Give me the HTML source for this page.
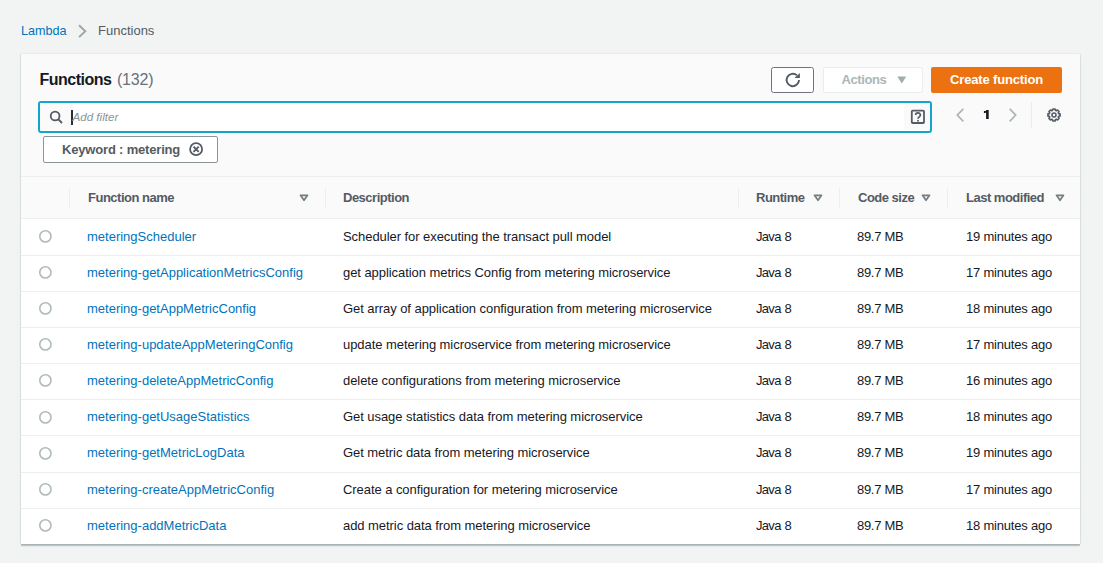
<!DOCTYPE html>
<html><head><meta charset="utf-8">
<style>
*{margin:0;padding:0;box-sizing:border-box}
html,body{width:1103px;height:563px;overflow:hidden;background:#f2f3f3;font-family:"Liberation Sans",sans-serif;font-size:13px;color:#16191f}
.a{position:absolute;white-space:nowrap}
.t{line-height:16px;height:16px}
.panel{position:absolute;left:21px;top:54px;width:1059px;height:490px;background:#fafafa;border-radius:1px;box-shadow:0 1px 0 0 #aab4b6,0 2px 0 0 #bcc3c5,0 3px 1px 0 rgba(0,28,36,.05),1px 0 1px 0 rgba(0,28,36,.1),-1px 0 1px 0 rgba(0,28,36,.1),0 -1px 1px 0 rgba(0,28,36,.02)}
.hline{position:absolute;left:0;width:1059px;height:1px;background:#edefef}
.vdiv{position:absolute;top:134px;width:1px;height:20px;background:#edefef}
.link{color:#0073bb}
.th{font-weight:bold;color:#545b64;font-size:13px;letter-spacing:-0.5px}
.sort{position:absolute;top:140px}
</style></head><body>
<!-- breadcrumb -->
<div class="a t link" style="left:21px;top:22.5px;font-size:12.6px">Lambda</div>
<svg class="a" style="left:77px;top:24px" width="11" height="15" viewBox="0 0 11 15"><path d="M2 1.3 L8.3 7.2 L2 13.1" fill="none" stroke="#9aa6a7" stroke-width="1.9"/></svg>
<div class="a t" style="left:98px;top:22.5px;color:#545b64">Functions</div>

<div class="panel">
  <!-- header -->
  <div class="a" style="left:18.5px;top:16.5px;font-size:16px;line-height:18px;font-weight:bold;color:#16191f;letter-spacing:-0.5px">Functions<span style="font-weight:normal;color:#687078;font-size:16px;margin-left:5.5px;letter-spacing:-0.2px">(132)</span></div>

  <!-- refresh button -->
  <div class="a" style="left:750px;top:13px;width:43px;height:26px;border:1px solid #6c737a;border-radius:2.5px;background:#fff"></div>
  <svg class="a" style="left:759px;top:14px" width="26" height="24" viewBox="0 0 26 24"><path d="M19 12 A6.2 6.2 0 1 1 16.9 7.3" fill="none" stroke="#545b64" stroke-width="1.9"/><path d="M19.9 4.9 L19.9 10.1 L14.5 10.1 Z" fill="#545b64"/></svg>

  <!-- actions -->
  <div class="a" style="left:802px;top:13px;width:100px;height:26px;border:1px solid #eaeded;border-radius:2px;background:#fff"></div>
  <div class="a t" style="left:820.5px;top:18px;font-weight:bold;color:#aab7b8;font-size:13px;letter-spacing:-0.4px">Actions</div>
  <svg class="a" style="left:875px;top:22px" width="11" height="9" viewBox="0 0 11 9"><path d="M1.3 0.4 H10.2 L5.75 7.6 Z" fill="#9fadae"/></svg>

  <!-- create function -->
  <div class="a" style="left:910px;top:13px;width:131px;height:26px;border-radius:2px;background:#ec7211"></div>
  <div class="a t" style="left:929px;top:18px;font-weight:bold;color:#fff;font-size:13px;letter-spacing:-0.15px">Create function</div>

  <!-- search -->
  <div class="a" style="left:17px;top:47px;width:894px;height:31.5px;border:2px solid #12a6ce;border-radius:3px;background:#fff"></div>
  <div class="a" style="left:19px;top:49px;width:32px;height:27px;background:#fafafa"></div>
  <svg class="a" style="left:27px;top:55px" width="16" height="16" viewBox="0 0 16 16"><circle cx="7.1" cy="7" r="4.4" fill="none" stroke="#545b64" stroke-width="1.8"/><path d="M10.2 10.2 L14 14" stroke="#545b64" stroke-width="1.9"/></svg>
  <div class="a" style="left:50px;top:56px;width:2px;height:14.5px;background:#2b2e34"></div>
  <div class="a t" style="left:51.5px;top:54.5px;font-style:italic;color:#879596;font-size:11.6px">Add filter</div>
  <div class="a" style="left:883px;top:49px;width:26px;height:27px;background:#fafafa"></div>
  <svg class="a" style="left:889px;top:55px" width="16" height="16" viewBox="0 0 16 16"><rect x="1.8" y="1.7" width="12.2" height="12.3" rx="0.8" fill="none" stroke="#545b64" stroke-width="1.8"/><path d="M5.6 6 C5.6 3.3 10.4 3.3 10.4 5.9 C10.4 7.8 8 7.8 8 9.8" fill="none" stroke="#545b64" stroke-width="1.7"/><circle cx="8" cy="11.7" r="0.95" fill="#545b64"/></svg>

  <!-- pagination -->
  <svg class="a" style="left:934px;top:54px" width="10" height="14" viewBox="0 0 10 14"><path d="M8.3 0.8 L2.3 7.1 L8.3 13.4" fill="none" stroke="#aab7b8" stroke-width="1.7"/></svg>
  <svg class="a" style="left:961px;top:54px" width="10" height="14" viewBox="0 0 10 14"><path d="M4.1 2 H6.7 V11 H4.1 Z M1.9 3.3 L4.4 2 L4.4 4.4 L1.9 5.2 Z" fill="#16191f"/></svg>
  <svg class="a" style="left:987px;top:54px" width="10" height="14" viewBox="0 0 10 14"><path d="M1.7 0.8 L7.7 7.1 L1.7 13.4" fill="none" stroke="#aab7b8" stroke-width="1.7"/></svg>
  <div class="a" style="left:1010px;top:48px;width:1px;height:26px;background:#eaeded"></div>
  <svg class="a" style="left:1025px;top:53px" width="16" height="16" viewBox="0 0 16 16">
    <path d="M12.69 6.57 L14.01 6.94 L14.01 9.06 L12.69 9.43 L12.33 10.30 L13.00 11.50 L11.50 13.00 L10.30 12.33 L9.43 12.69 L9.06 14.01 L6.94 14.01 L6.57 12.69 L5.70 12.33 L4.50 13.00 L3.00 11.50 L3.67 10.30 L3.31 9.43 L1.99 9.06 L1.99 6.94 L3.31 6.57 L3.67 5.70 L3.00 4.50 L4.50 3.00 L5.70 3.67 L6.57 3.31 L6.94 1.99 L9.06 1.99 L9.43 3.31 L10.30 3.67 L11.50 3.00 L13.00 4.50 L12.33 5.70 Z" fill="none" stroke="#545b64" stroke-width="1.7" stroke-linejoin="round"/>
    <circle cx="8" cy="8" r="2.0" fill="none" stroke="#545b64" stroke-width="1.6"/>
  </svg>

  <!-- token -->
  <div class="a" style="left:22px;top:82px;width:175px;height:27px;border:1px solid #8d9599;border-radius:2px;background:#fff"></div>
  <div class="a t" style="left:41px;top:88px;font-weight:bold;color:#545b64;font-size:13px;letter-spacing:-0.18px">Keyword : metering</div>
  <svg class="a" style="left:167px;top:88px" width="16" height="16" viewBox="0 0 16 16"><circle cx="8.1" cy="7.2" r="6" fill="none" stroke="#545b64" stroke-width="1.8"/><path d="M5.5 4.6 L10.7 9.8 M10.7 4.6 L5.5 9.8" stroke="#545b64" stroke-width="1.9"/></svg>

  <!-- table -->
  <div class="hline" style="top:122px"></div>
  <div class="a" style="left:0;top:165px;width:1059px;height:325px;background:#fff"></div>
  <div class="hline" style="top:164px"></div>
  <div class="vdiv" style="left:48px"></div>
  <div class="vdiv" style="left:304px"></div>
  <div class="vdiv" style="left:717px"></div>
  <div class="vdiv" style="left:818px"></div>
  <div class="vdiv" style="left:926px"></div>

  <div class="a t th" style="left:67px;top:136px">Function name</div>
  <div class="a t th" style="left:322px;top:136px">Description</div>
  <div class="a t th" style="left:735px;top:136px">Runtime</div>
  <div class="a t th" style="left:837px;top:136px">Code size</div>
  <div class="a t th" style="left:945px;top:136px">Last modified</div>
  <svg class="sort a" style="left:278px" width="10" height="9" viewBox="0 0 10 9"><path d="M1.5 1.3 H8.5 L5 6.3 Z" fill="none" stroke="#727f81" stroke-width="1.7" stroke-linejoin="round"/></svg>
  <svg class="sort a" style="left:792px" width="10" height="9" viewBox="0 0 10 9"><path d="M1.5 1.3 H8.5 L5 6.3 Z" fill="none" stroke="#727f81" stroke-width="1.7" stroke-linejoin="round"/></svg>
  <svg class="sort a" style="left:900px" width="10" height="9" viewBox="0 0 10 9"><path d="M1.5 1.3 H8.5 L5 6.3 Z" fill="none" stroke="#727f81" stroke-width="1.7" stroke-linejoin="round"/></svg>
  <svg class="sort a" style="left:1034px" width="10" height="9" viewBox="0 0 10 9"><path d="M1.5 1.3 H8.5 L5 6.3 Z" fill="none" stroke="#727f81" stroke-width="1.7" stroke-linejoin="round"/></svg>

  <svg class="a" style="left:17px;top:175.0px" width="15" height="15" viewBox="0 0 15 15"><circle cx="7.4" cy="7.4" r="5.6" fill="#fff" stroke="#b0bbbc" stroke-width="1.6"/></svg>
  <div class="a t link" style="left:66px;top:174.8px">meteringScheduler</div>
  <div class="a t" style="left:322px;top:174.8px;letter-spacing:-0.06px">Scheduler for executing the transact pull model</div>
  <div class="a t" style="left:735px;top:174.8px;letter-spacing:-0.7px;word-spacing:1px">Java 8</div>
  <div class="a t" style="left:836px;top:174.8px;letter-spacing:-0.3px">89.7 MB</div>
  <div class="a t" style="left:945px;top:174.8px;letter-spacing:-0.2px">19 minutes ago</div>
  <div class="hline" style="top:201px"></div>
  <svg class="a" style="left:17px;top:211.1px" width="15" height="15" viewBox="0 0 15 15"><circle cx="7.4" cy="7.4" r="5.6" fill="#fff" stroke="#b0bbbc" stroke-width="1.6"/></svg>
  <div class="a t link" style="left:66px;top:210.9px">metering-getApplicationMetricsConfig</div>
  <div class="a t" style="left:322px;top:210.9px;letter-spacing:-0.06px">get application metrics Config from metering microservice</div>
  <div class="a t" style="left:735px;top:210.9px;letter-spacing:-0.7px;word-spacing:1px">Java 8</div>
  <div class="a t" style="left:836px;top:210.9px;letter-spacing:-0.3px">89.7 MB</div>
  <div class="a t" style="left:945px;top:210.9px;letter-spacing:-0.2px">17 minutes ago</div>
  <div class="hline" style="top:237px"></div>
  <svg class="a" style="left:17px;top:247.2px" width="15" height="15" viewBox="0 0 15 15"><circle cx="7.4" cy="7.4" r="5.6" fill="#fff" stroke="#b0bbbc" stroke-width="1.6"/></svg>
  <div class="a t link" style="left:66px;top:247.0px">metering-getAppMetricConfig</div>
  <div class="a t" style="left:322px;top:247.0px;letter-spacing:-0.06px">Get array of application configuration from metering microservice</div>
  <div class="a t" style="left:735px;top:247.0px;letter-spacing:-0.7px;word-spacing:1px">Java 8</div>
  <div class="a t" style="left:836px;top:247.0px;letter-spacing:-0.3px">89.7 MB</div>
  <div class="a t" style="left:945px;top:247.0px;letter-spacing:-0.2px">18 minutes ago</div>
  <div class="hline" style="top:273px"></div>
  <svg class="a" style="left:17px;top:283.3px" width="15" height="15" viewBox="0 0 15 15"><circle cx="7.4" cy="7.4" r="5.6" fill="#fff" stroke="#b0bbbc" stroke-width="1.6"/></svg>
  <div class="a t link" style="left:66px;top:283.1px">metering-updateAppMeteringConfig</div>
  <div class="a t" style="left:322px;top:283.1px;letter-spacing:-0.06px">update metering microservice from metering microservice</div>
  <div class="a t" style="left:735px;top:283.1px;letter-spacing:-0.7px;word-spacing:1px">Java 8</div>
  <div class="a t" style="left:836px;top:283.1px;letter-spacing:-0.3px">89.7 MB</div>
  <div class="a t" style="left:945px;top:283.1px;letter-spacing:-0.2px">17 minutes ago</div>
  <div class="hline" style="top:309px"></div>
  <svg class="a" style="left:17px;top:319.4px" width="15" height="15" viewBox="0 0 15 15"><circle cx="7.4" cy="7.4" r="5.6" fill="#fff" stroke="#b0bbbc" stroke-width="1.6"/></svg>
  <div class="a t link" style="left:66px;top:319.2px">metering-deleteAppMetricConfig</div>
  <div class="a t" style="left:322px;top:319.2px;letter-spacing:-0.06px">delete configurations from metering microservice</div>
  <div class="a t" style="left:735px;top:319.2px;letter-spacing:-0.7px;word-spacing:1px">Java 8</div>
  <div class="a t" style="left:836px;top:319.2px;letter-spacing:-0.3px">89.7 MB</div>
  <div class="a t" style="left:945px;top:319.2px;letter-spacing:-0.2px">16 minutes ago</div>
  <div class="hline" style="top:345px"></div>
  <svg class="a" style="left:17px;top:355.5px" width="15" height="15" viewBox="0 0 15 15"><circle cx="7.4" cy="7.4" r="5.6" fill="#fff" stroke="#b0bbbc" stroke-width="1.6"/></svg>
  <div class="a t link" style="left:66px;top:355.3px">metering-getUsageStatistics</div>
  <div class="a t" style="left:322px;top:355.3px;letter-spacing:-0.06px">Get usage statistics data from metering microservice</div>
  <div class="a t" style="left:735px;top:355.3px;letter-spacing:-0.7px;word-spacing:1px">Java 8</div>
  <div class="a t" style="left:836px;top:355.3px;letter-spacing:-0.3px">89.7 MB</div>
  <div class="a t" style="left:945px;top:355.3px;letter-spacing:-0.2px">18 minutes ago</div>
  <div class="hline" style="top:381px"></div>
  <svg class="a" style="left:17px;top:391.6px" width="15" height="15" viewBox="0 0 15 15"><circle cx="7.4" cy="7.4" r="5.6" fill="#fff" stroke="#b0bbbc" stroke-width="1.6"/></svg>
  <div class="a t link" style="left:66px;top:391.4px">metering-getMetricLogData</div>
  <div class="a t" style="left:322px;top:391.4px;letter-spacing:-0.06px">Get metric data from metering microservice</div>
  <div class="a t" style="left:735px;top:391.4px;letter-spacing:-0.7px;word-spacing:1px">Java 8</div>
  <div class="a t" style="left:836px;top:391.4px;letter-spacing:-0.3px">89.7 MB</div>
  <div class="a t" style="left:945px;top:391.4px;letter-spacing:-0.2px">19 minutes ago</div>
  <div class="hline" style="top:418px"></div>
  <svg class="a" style="left:17px;top:427.7px" width="15" height="15" viewBox="0 0 15 15"><circle cx="7.4" cy="7.4" r="5.6" fill="#fff" stroke="#b0bbbc" stroke-width="1.6"/></svg>
  <div class="a t link" style="left:66px;top:427.5px">metering-createAppMetricConfig</div>
  <div class="a t" style="left:322px;top:427.5px;letter-spacing:-0.06px">Create a configuration for metering microservice</div>
  <div class="a t" style="left:735px;top:427.5px;letter-spacing:-0.7px;word-spacing:1px">Java 8</div>
  <div class="a t" style="left:836px;top:427.5px;letter-spacing:-0.3px">89.7 MB</div>
  <div class="a t" style="left:945px;top:427.5px;letter-spacing:-0.2px">17 minutes ago</div>
  <div class="hline" style="top:454px"></div>
  <svg class="a" style="left:17px;top:463.8px" width="15" height="15" viewBox="0 0 15 15"><circle cx="7.4" cy="7.4" r="5.6" fill="#fff" stroke="#b0bbbc" stroke-width="1.6"/></svg>
  <div class="a t link" style="left:66px;top:463.6px">metering-addMetricData</div>
  <div class="a t" style="left:322px;top:463.6px;letter-spacing:-0.06px">add metric data from metering microservice</div>
  <div class="a t" style="left:735px;top:463.6px;letter-spacing:-0.7px;word-spacing:1px">Java 8</div>
  <div class="a t" style="left:836px;top:463.6px;letter-spacing:-0.3px">89.7 MB</div>
  <div class="a t" style="left:945px;top:463.6px;letter-spacing:-0.2px">18 minutes ago</div>
</div>
</body></html>
